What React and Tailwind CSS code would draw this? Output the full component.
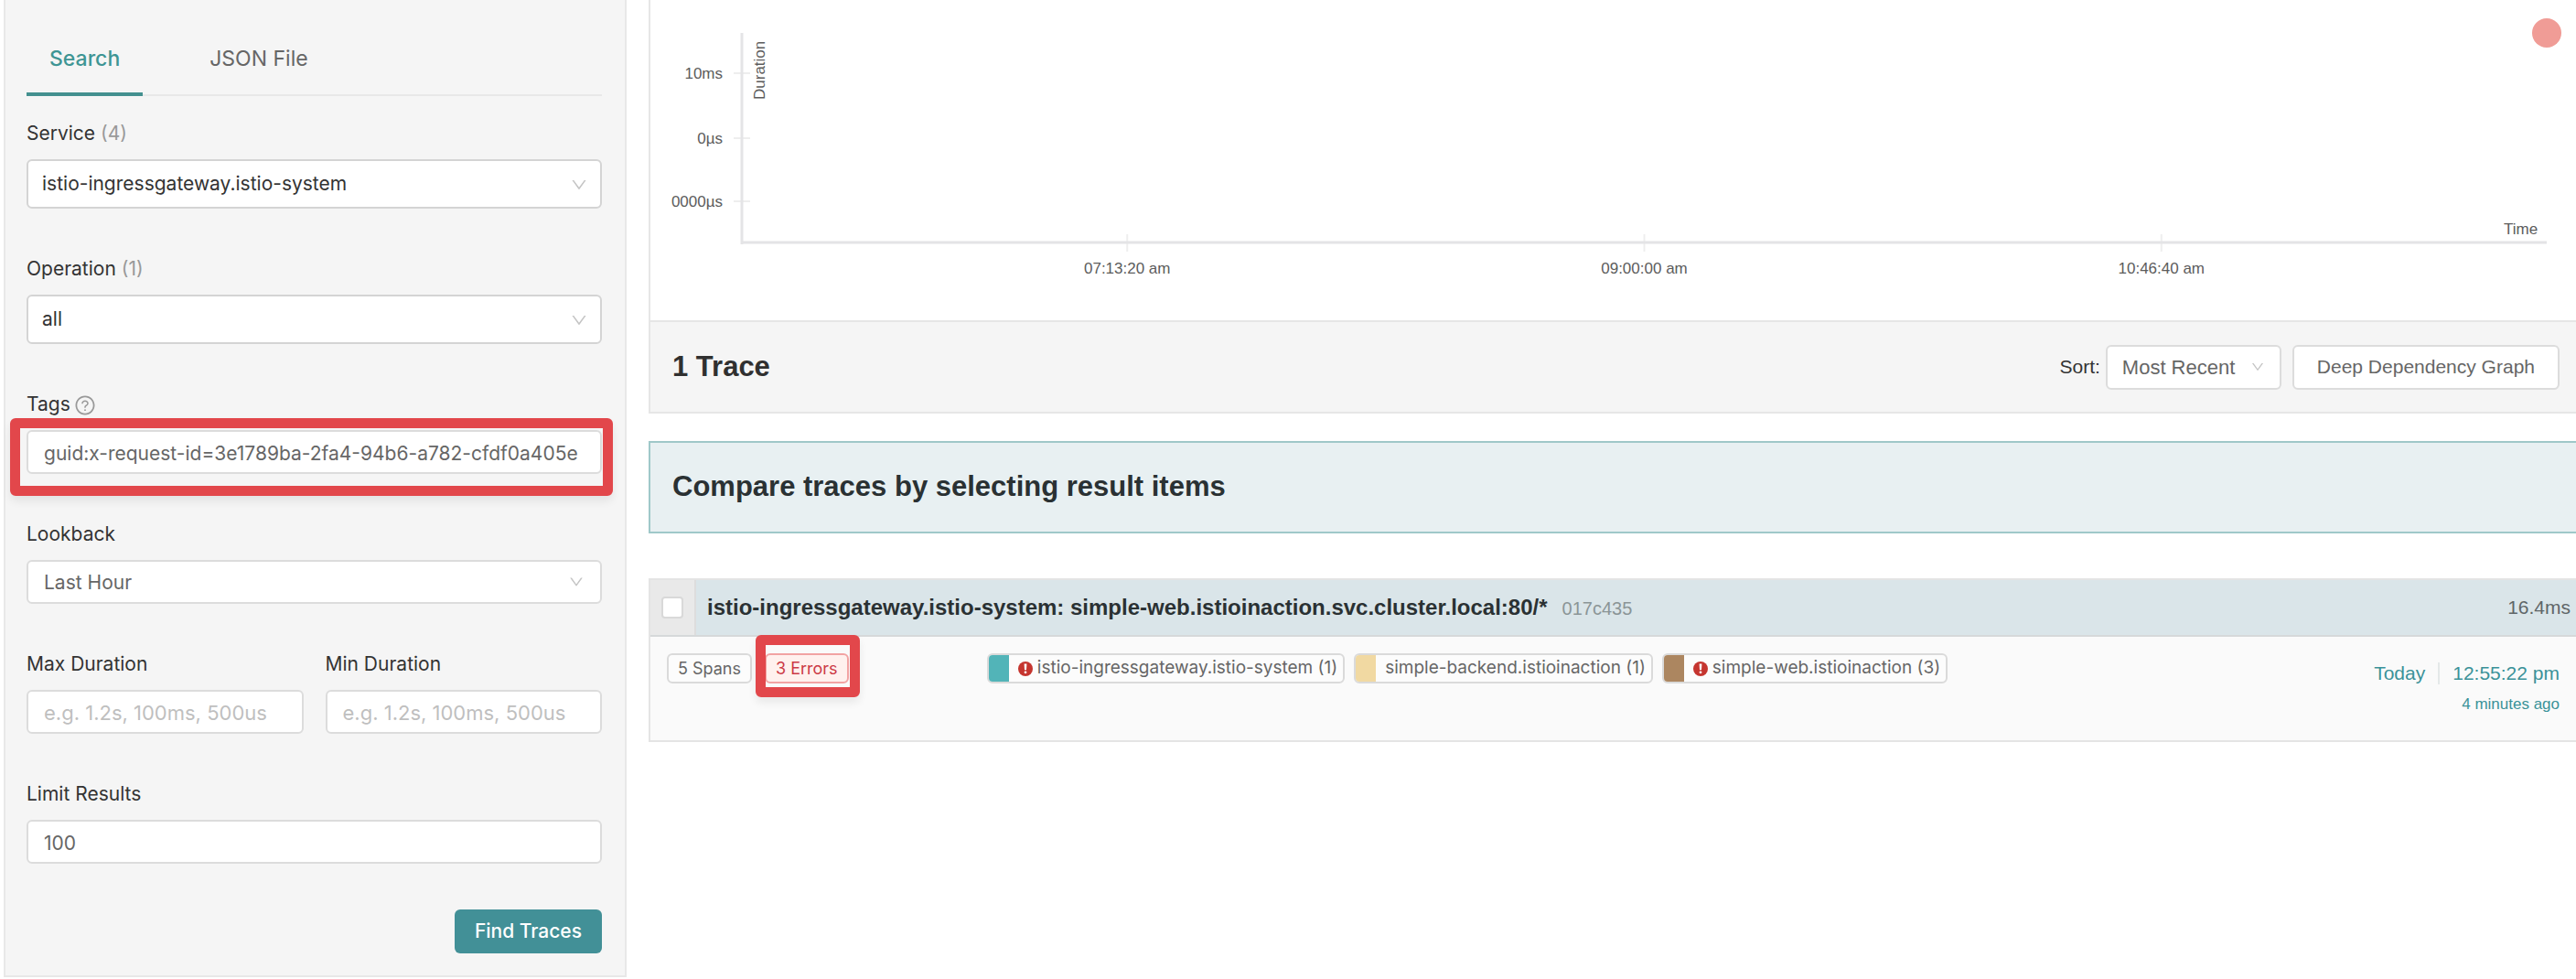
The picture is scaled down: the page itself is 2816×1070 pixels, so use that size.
import React from "react";
import { AiOutlineDown, AiOutlineQuestionCircle } from "react-icons/ai";

const inputClass =
  "block w-full h-12 rounded-md border-2 border-[#dcdcdc] bg-white pl-[17px] pr-3 pt-0.5 text-[21px] text-[#666666] placeholder:text-[22px] placeholder:text-[#bfbfbf]";

function Field({ id, label, count, icon, children }) {
  return (
    <div className="min-w-0 flex-1">
      <div className="mb-3 flex h-8 items-center gap-1 text-[21px] text-[#333333]">
        <label htmlFor={id}>
          {label}
          {count && <span className="text-[#999999]"> {count}</span>}
        </label>
        {icon}
      </div>
      {children}
    </div>
  );
}

function TallSelect({ id, value }) {
  return (
    <div className="relative">
      <select
        id={id}
        className="block h-[54px] w-full appearance-none rounded-md border-2 border-[#d4d4d4] bg-white pl-[15px] pr-12 text-[21px] text-[#333333]"
      >
        <option>{value}</option>
      </select>
      <AiOutlineDown className="pointer-events-none absolute right-[15px] top-[18px] size-5 text-[#c4c4c4]" />
    </div>
  );
}

function Highlight({ className }) {
  return (
    <span
      aria-hidden="true"
      className={
        "pointer-events-none absolute rounded-md border-[11px] border-[#e2474b] shadow-[0_6px_10px_rgba(0,0,0,0.07)] " +
        className
      }
    />
  );
}

function SearchPanel() {
  return (
    <aside className="ml-1 w-[681px] shrink-0 border-2 border-t-0 border-[#e8e8e8] bg-[#f5f5f5] pb-6 pl-[23px] pr-[25px]">
      <nav className="flex gap-12 border-b-2 border-[#e8e8e8] pt-[21px] text-[23px]">
        <button className="-mb-0.5 h-[84px] border-b-4 border-[#43908f] px-[25px] pt-1.5 font-medium text-[#3e9594]">
          Search
        </button>
        <button className="-mb-0.5 h-[84px] border-b-4 border-transparent px-[25px] pt-1.5 text-[#666666]">
          JSON File
        </button>
      </nav>
      <form className="flex flex-col gap-[50px] pt-[25px]" onSubmit={(e) => e.preventDefault()}>
        <Field id="service" label="Service" count="(4)">
          <TallSelect id="service" value="istio-ingressgateway.istio-system" />
        </Field>
        <Field id="operation" label="Operation" count="(1)">
          <TallSelect id="operation" value="all" />
        </Field>
        <Field
          id="tags"
          label="Tags"
          icon={<AiOutlineQuestionCircle className="mt-0.5 size-6 text-[#999999]" />}
        >
          <div className="relative">
            <input
              id="tags"
              className={inputClass}
              defaultValue="guid:x-request-id=3e1789ba-2fa4-94b6-a782-cfdf0a405e"
            />
            <Highlight className="-bottom-6 -left-[18px] -right-3 -top-[13px]" />
          </div>
        </Field>
        <Field id="lookback" label="Lookback">
          <div className="relative">
            <select id="lookback" className={inputClass + " appearance-none"}>
              <option>Last Hour</option>
            </select>
            <AiOutlineDown className="pointer-events-none absolute right-[19px] top-[15px] size-[18px] text-[#c4c4c4]" />
          </div>
        </Field>
        <div className="flex gap-6">
          <Field id="max" label="Max Duration">
            <input id="max" className={inputClass} placeholder="e.g. 1.2s, 100ms, 500us" />
          </Field>
          <Field id="min" label="Min Duration">
            <input id="min" className={inputClass} placeholder="e.g. 1.2s, 100ms, 500us" />
          </Field>
        </div>
        <Field id="limit" label="Limit Results">
          <input id="limit" className={inputClass} defaultValue="100" />
        </Field>
        <button className="h-12 self-end rounded-md bg-[#429097] px-[22px] text-[21px] font-medium text-white">
          Find Traces
        </button>
      </form>
    </aside>
  );
}

const timeTicks = [
  { x: "21.35%", label: "07:13:20 am" },
  { x: "50%", label: "09:00:00 am" },
  { x: "78.65%", label: "10:46:40 am" },
];
const durationTicks = [
  { y: 80, label: "10ms" },
  { y: 151, label: "0µs" },
  { y: 220, label: "0000µs" },
];

function ScatterPlot() {
  return (
    <div className="ml-[100px] mr-8">
      <svg className="block h-[350px] w-full overflow-visible text-[17px]" fill="#5c5c5c">
        <g stroke="#eeeeee" strokeWidth="2">
          {durationTicks.map((t) => (
            <line key={t.label} x1="-9" x2="9" y1={t.y} y2={t.y} />
          ))}
          {timeTicks.map((t) => (
            <line key={t.label} x1={t.x} x2={t.x} y1="256" y2="275" />
          ))}
        </g>
        <g stroke="#e4e4e6" strokeWidth="3">
          <line x1="0" x2="0" y1="36" y2="267" />
          <line x1="0" x2="100%" y1="265" y2="265" />
        </g>
        {durationTicks.map((t) => (
          <text key={t.label} x="-21" y={t.y + 6} textAnchor="end">
            {t.label}
          </text>
        ))}
        {timeTicks.map((t) => (
          <text key={t.label} x={t.x} y="299" textAnchor="middle">
            {t.label}
          </text>
        ))}
        <text x="-109" y="25" transform="rotate(-90)">
          Duration
        </text>
        <text x="99.5%" y="256" textAnchor="end">
          Time
        </text>
        <circle cx="100%" cy="36" r="16" fill="#f09c96" />
      </svg>
    </div>
  );
}

function ErrorIcon() {
  return (
    <svg viewBox="0 0 16 16" className="size-4 shrink-0">
      <circle cx="8" cy="8" r="8" fill="#c5352f" />
      <path d="M6.6 2.6h2.8L9 9.2H7z" fill="#fff" />
      <circle cx="8" cy="11.8" r="1.4" fill="#fff" />
    </svg>
  );
}

function ServiceTag({ bar, error, children }) {
  return (
    <li className="flex h-[33px] overflow-hidden rounded-md border-2 border-[#dadada] bg-[#fcfcfc] text-[19px] text-[#666666]">
      <span className={"-my-0.5 -ml-0.5 w-6 shrink-0 " + bar} />
      <span className="flex items-center gap-[5px] pl-2.5 pr-1.5">
        {error && <ErrorIcon />}
        {children}
      </span>
    </li>
  );
}

function TraceResult() {
  return (
    <article className="mt-[49px] border-2 border-r-0 border-[#e4e4e4] bg-[#fafafa]">
      <header className="flex h-[62px] border-b-2 border-[#d6d9da] bg-[#dae5e9]">
        <div className="flex w-[50px] shrink-0 items-center justify-center border-r-2 border-[#dddddd] bg-[#e9e9e9]">
          <input
            type="checkbox"
            aria-label="Select trace"
            className="size-6 appearance-none rounded-sm border-2 border-[#d9d9d9] bg-white"
          />
        </div>
        <div className="flex flex-1 items-center justify-between pl-3 pr-1.5">
          <h3 className="flex items-baseline gap-4 text-[24px] font-bold text-[#2a3133]">
            istio-ingressgateway.istio-system: simple-web.istioinaction.svc.cluster.local:80/*
            <small className="text-[20px] font-normal text-[#8b9597]">017c435</small>
          </h3>
          <span className="text-[21px] text-[#5f6668]">16.4ms</span>
        </div>
      </header>
      <div className="flex h-[113px] items-start pl-[18px] pr-[18px] pt-[18px]">
        <ul className="flex w-1/6 shrink-0 gap-3.5 font-['Inter',sans-serif] text-[18px]">
          <li className="flex h-[33px] items-center rounded-md border-2 border-[#dadada] bg-[#fcfcfc] px-2.5 text-[#666666]">
            5 Spans
          </li>
          <li className="relative flex h-[33px] items-center rounded-md border-2 border-[#f2a3a3] bg-[#fff1ee] px-2.5 text-[#cc3a46]">
            3 Errors
            <Highlight className="-bottom-[17px] -left-3 -right-3.5 -top-[22px]" />
          </li>
        </ul>
        <ul className="flex flex-1 gap-2.5 pl-[5px] font-['Inter',sans-serif]">
          <ServiceTag bar="bg-[#52b4b8]" error>
            istio-ingressgateway.istio-system (1)
          </ServiceTag>
          <ServiceTag bar="bg-[#f1d9a2]">simple-backend.istioinaction (1)</ServiceTag>
          <ServiceTag bar="bg-[#ac8660]" error>
            simple-web.istioinaction (3)
          </ServiceTag>
        </ul>
        <div className="flex flex-col items-end gap-2.5 pt-2.5 text-[#3b9299]">
          <div className="flex items-center text-[21px] leading-6">
            <span className="pr-3.5">Today</span>
            <span className="border-l-2 border-[#e4e8e8] pl-3.5">12:55:22 pm</span>
          </div>
          <small className="text-[17px] leading-6">4 minutes ago</small>
        </div>
      </div>
    </article>
  );
}

export default function App() {
  return (
    <div className="flex items-start bg-white font-['Inter',sans-serif]">
      <SearchPanel />
      <main className="ml-6 min-w-0 flex-1 font-['Liberation_Sans',Arial,sans-serif]">
        <section className="border-b-2 border-l-2 border-[#e6e6e6]">
          <ScatterPlot />
          <div className="flex h-[100px] items-center border-t-2 border-[#e6e6e6] bg-[#f5f5f5] pl-6 pr-[18px] text-[21px]">
            <h2 className="flex-1 text-[31px] font-bold text-[#303030]">1 Trace</h2>
            <label htmlFor="sort" className="mr-1.5 text-[#333333]">
              Sort:
            </label>
            <div className="relative mr-3">
              <select
                id="sort"
                className="block h-[49px] w-[192px] appearance-none rounded-md border-2 border-[#dcdcdc] bg-white pl-4 text-[22px] text-[#666666]"
              >
                <option>Most Recent</option>
              </select>
              <AiOutlineDown className="pointer-events-none absolute right-[18px] top-4 size-4 text-[#c4c4c4]" />
            </div>
            <button className="h-[49px] rounded-md border-2 border-[#dcdcdc] bg-white px-[25px] text-[#666666]">
              Deep Dependency Graph
            </button>
          </div>
        </section>
        <section className="mt-[30px] flex h-[101px] items-center border-2 border-r-0 border-[#9fc8c9] bg-[#e8f0f2] pl-6">
          <h2 className="text-[31px] font-bold text-[#2a3133]">Compare traces by selecting result items</h2>
        </section>
        <TraceResult />
      </main>
    </div>
  );
}
